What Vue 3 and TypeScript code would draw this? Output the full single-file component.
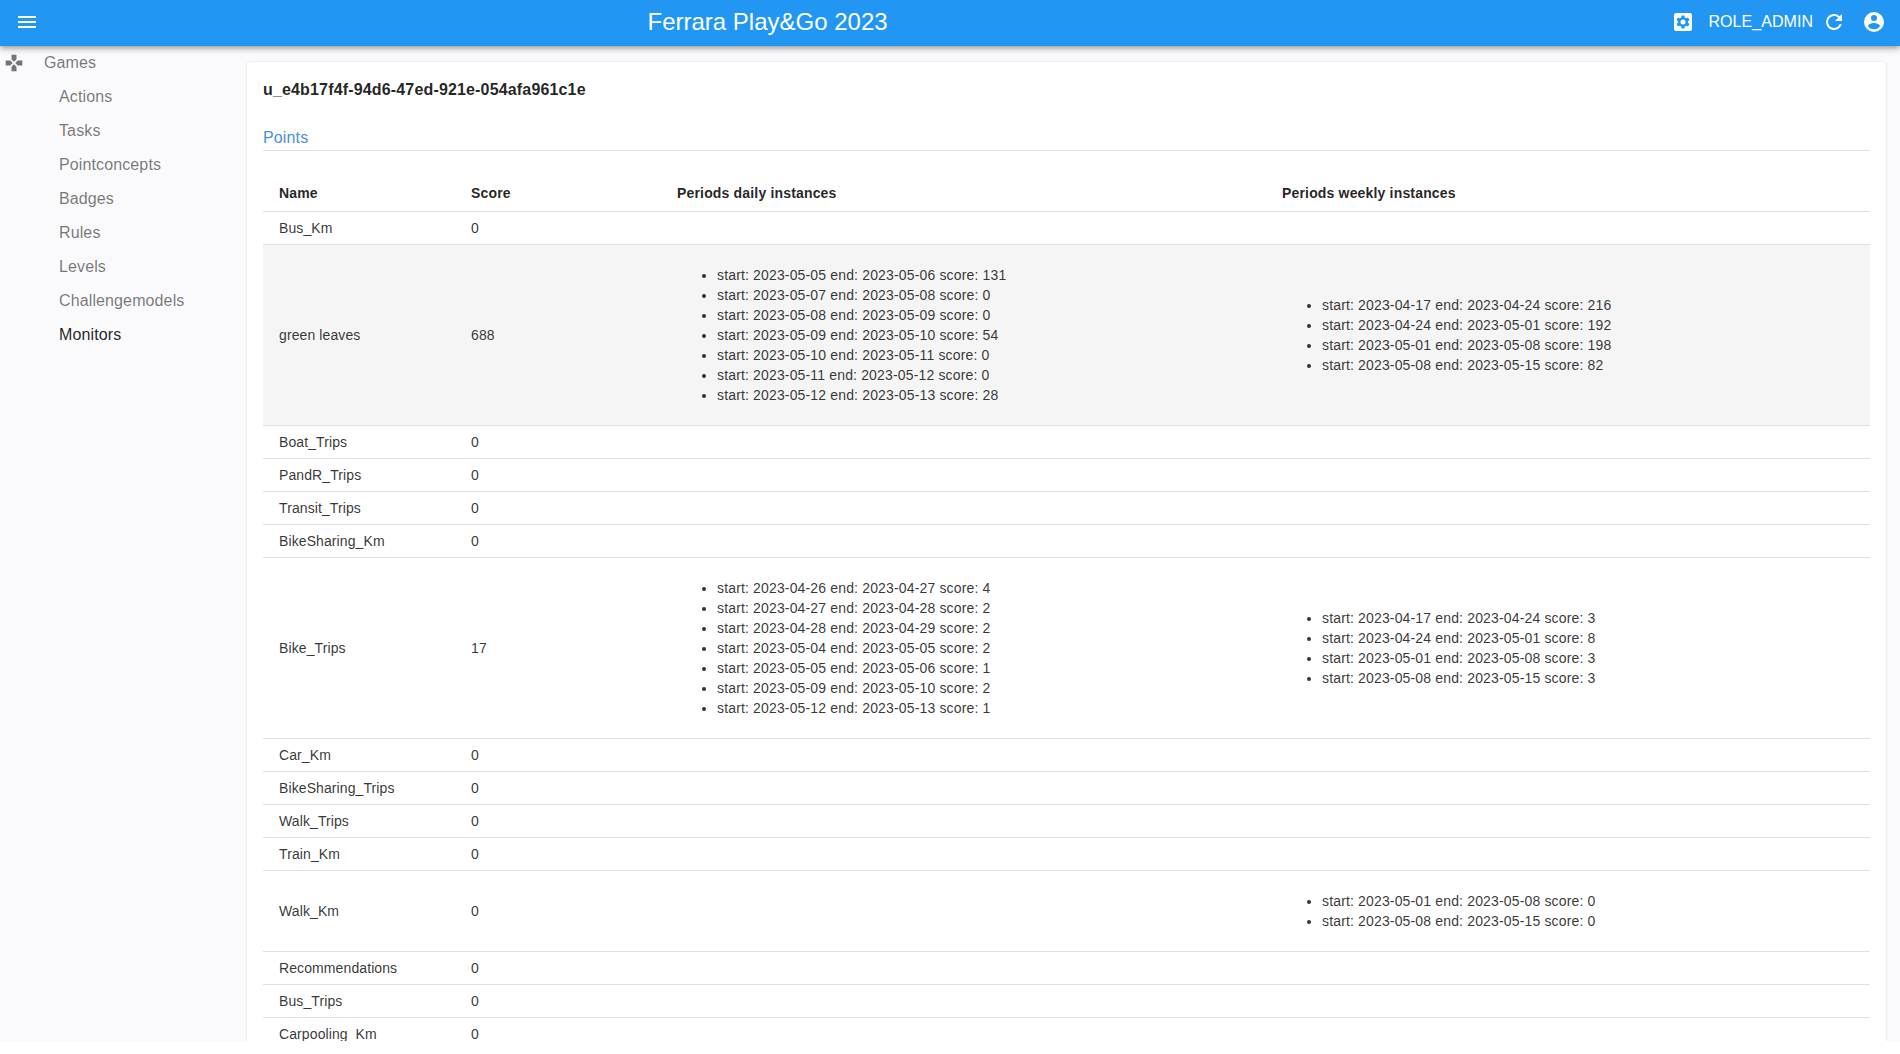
<script setup lang="ts">
interface Row {
  name: string
  score: number
  daily?: string[]
  weekly?: string[]
}

const item = (start: string, end: string, score: number) => `start: ${start} end: ${end} score: ${score}`

const menu = ['Actions', 'Tasks', 'Pointconcepts', 'Badges', 'Rules', 'Levels', 'Challengemodels', 'Monitors']

const rows: Row[] = [
  { name: 'Bus_Km', score: 0 },
  {
    name: 'green leaves',
    score: 688,
    daily: [
      item('2023-05-05', '2023-05-06', 131),
      item('2023-05-07', '2023-05-08', 0),
      item('2023-05-08', '2023-05-09', 0),
      item('2023-05-09', '2023-05-10', 54),
      item('2023-05-10', '2023-05-11', 0),
      item('2023-05-11', '2023-05-12', 0),
      item('2023-05-12', '2023-05-13', 28),
    ],
    weekly: [
      item('2023-04-17', '2023-04-24', 216),
      item('2023-04-24', '2023-05-01', 192),
      item('2023-05-01', '2023-05-08', 198),
      item('2023-05-08', '2023-05-15', 82),
    ],
  },
  { name: 'Boat_Trips', score: 0 },
  { name: 'PandR_Trips', score: 0 },
  { name: 'Transit_Trips', score: 0 },
  { name: 'BikeSharing_Km', score: 0 },
  {
    name: 'Bike_Trips',
    score: 17,
    daily: [
      item('2023-04-26', '2023-04-27', 4),
      item('2023-04-27', '2023-04-28', 2),
      item('2023-04-28', '2023-04-29', 2),
      item('2023-05-04', '2023-05-05', 2),
      item('2023-05-05', '2023-05-06', 1),
      item('2023-05-09', '2023-05-10', 2),
      item('2023-05-12', '2023-05-13', 1),
    ],
    weekly: [
      item('2023-04-17', '2023-04-24', 3),
      item('2023-04-24', '2023-05-01', 8),
      item('2023-05-01', '2023-05-08', 3),
      item('2023-05-08', '2023-05-15', 3),
    ],
  },
  { name: 'Car_Km', score: 0 },
  { name: 'BikeSharing_Trips', score: 0 },
  { name: 'Walk_Trips', score: 0 },
  { name: 'Train_Km', score: 0 },
  {
    name: 'Walk_Km',
    score: 0,
    weekly: [item('2023-05-01', '2023-05-08', 0), item('2023-05-08', '2023-05-15', 0)],
  },
  { name: 'Recommendations', score: 0 },
  { name: 'Bus_Trips', score: 0 },
  { name: 'Carpooling_Km', score: 0 },
]
</script>

<template>
  <div class="page">
    <header class="appbar">
      <button class="icon-btn burger" type="button">
        <svg viewBox="0 0 24 24" width="24" height="24"><path d="M3 6h18v2H3zm0 5h18v2H3zm0 5h18v2H3z" /></svg>
      </button>
      <div class="title">Ferrara Play&amp;Go 2023</div>
      <div class="actions">
        <svg class="cog" viewBox="0 0 24 24" width="24" height="24">
          <path fill-rule="evenodd" d="M5 3h14a2 2 0 0 1 2 2v14a2 2 0 0 1-2 2H5a2 2 0 0 1-2-2V5a2 2 0 0 1 2-2zm12 9.800v-1.600l1.500-1.200-1.500-2.500-1.800.7-1.400-.8L13.500 5.500h-3l-.3 1.900-1.400.8-1.800-.7-1.500 2.500 1.500 1.200v1.600L5.500 14l1.500 2.500 1.800-.7 1.400.8.3 1.900h3l.3-1.900 1.400-.8 1.800.7 1.500-2.500zM12 14.500a2.500 2.500 0 1 1 0-5 2.500 2.500 0 0 1 0 5z" />
        </svg>
        <span class="role">ROLE_ADMIN</span>
        <svg class="refresh" viewBox="0 0 24 24" width="24" height="24">
          <path d="M17.650 6.350A7.960 7.960 0 0 0 12 4a8 8 0 1 0 7.730 10h-2.080A6 6 0 1 1 12 6c1.660 0 3.140.69 4.220 1.780L13 11h7V4z" />
        </svg>
        <svg class="account" viewBox="0 0 24 24" width="24" height="24">
          <path d="M12 2a10 10 0 1 0 0 20 10 10 0 0 0 0-20zm0 3a3 3 0 1 1 0 6 3 3 0 0 1 0-6zm0 14.200a7.200 7.200 0 0 1-6-3.220c.03-1.990 4-3.080 6-3.080s5.970 1.090 6 3.080a7.200 7.200 0 0 1-6 3.220z" />
        </svg>
      </div>
    </header>

    <div class="body">
      <aside class="sidebar">
        <div class="group">
          <svg class="pad" viewBox="0 0 24 24" width="20" height="20">
            <path d="M15 7.500V2H9v5.500l3 3 3-3zM7.500 9H2v6h5.500l3-3-3-3zM9 16.500V22h6v-5.500l-3-3-3 3zM16.500 9l-3 3 3 3H22V9h-5.500z" />
          </svg>
          <span>Games</span>
        </div>
        <a v-for="m in menu" :key="m" class="link" :class="{ active: m === 'Monitors' }">{{ m }}</a>
      </aside>

      <main class="card">
        <h1 class="user">u_e4b17f4f-94d6-47ed-921e-054afa961c1e</h1>
        <div class="tab">Points</div>
        <table class="points">
          <thead>
            <tr>
              <th class="c-name">Name</th>
              <th class="c-score">Score</th>
              <th class="c-daily">Periods daily instances</th>
              <th>Periods weekly instances</th>
            </tr>
          </thead>
          <tbody>
            <tr v-for="(r, i) in rows" :key="i" :class="{ hover: r.name === 'green leaves' }">
              <td>{{ r.name }}</td>
              <td>{{ r.score }}</td>
              <td>
                <ul v-if="r.daily">
                  <li v-for="d in r.daily" :key="d">{{ d }}</li>
                </ul>
              </td>
              <td>
                <ul v-if="r.weekly">
                  <li v-for="w in r.weekly" :key="w">{{ w }}</li>
                </ul>
              </td>
            </tr>
          </tbody>
        </table>
      </main>
    </div>
  </div>
</template>

<style>
html,
body {
  margin: 0;
  background: #fff;
}
</style>

<style scoped>
.page {
  height: 1041px;
  overflow: hidden;
  background: #fafafc;
  font-family: "Liberation Sans", Arial, sans-serif;
  color: rgba(0, 0, 0, 0.87);
}

.appbar {
  position: relative;
  z-index: 2;
  height: 46px;
  display: flex;
  align-items: center;
  background: #2196f3;
  color: #fff;
  box-shadow: 0 2px 4px -1px rgba(0, 0, 0, 0.2), 0 4px 5px 0 rgba(0, 0, 0, 0.14), 0 1px 10px 0 rgba(0, 0, 0, 0.12);
}

.icon-btn {
  border: 0;
  padding: 0;
  background: none;
  display: flex;
}

.burger {
  margin: -2px 0 0 15px;
}

.burger svg {
  fill: #fff;
}

.title {
  position: absolute;
  left: 647.5px;
  top: 0;
  font-size: 24px;
  line-height: 44px;
}

.actions {
  margin: -2px 14px 0 auto;
  display: flex;
  align-items: center;
  fill: #fff;
}

.role {
  font-size: 16px;
  letter-spacing: 0.05px;
  margin: 0 9px 0 13px;
}

.refresh {
  margin-right: 16px;
}

.body {
  display: flex;
  align-items: flex-start;
}

.sidebar {
  width: 247px;
  flex: none;
  color: rgba(0, 0, 0, 0.54);
  font-size: 16px;
  letter-spacing: 0.12px;
}

.group {
  height: 34px;
  display: flex;
  align-items: center;
}

.pad {
  margin-left: 4px;
  margin-right: 20px;
  fill: #757575;
}

.link {
  display: block;
  height: 34px;
  line-height: 34px;
  padding-left: 59px;
}

.link.active {
  color: rgba(0, 0, 0, 0.87);
}

.card {
  flex: none;
  width: 1639px;
  height: 1000px;
  box-sizing: border-box;
  margin-top: 16px;
  padding: 16px;
  background: #fff;
  border-radius: 4px;
  box-shadow: 0 0 2px rgba(0, 0, 0, 0.15);
}

.user {
  margin: 0;
  font-size: 16px;
  line-height: 24px;
  font-weight: 700;
  letter-spacing: 0.16px;
}

.tab {
  margin-top: 24px;
  font-size: 16px;
  line-height: 24px;
  letter-spacing: 0.15px;
  color: #4a90d9;
  border-bottom: 1px solid #e0e0e0;
}

.points {
  width: 100%;
  margin-top: 24px;
  border-collapse: collapse;
  table-layout: fixed;
  font-size: 14px;
}

th {
  height: 36px;
  padding: 0 16px;
  text-align: left;
  font-size: 14px;
  font-weight: 700;
  letter-spacing: 0.17px;
  border-bottom: 1px solid #e0e0e0;
}

.c-name {
  width: 160px;
}

.c-score {
  width: 174px;
}

.c-daily {
  width: 573px;
}

td {
  height: 33px;
  padding: 4px 16px;
  box-sizing: border-box;
  color: rgba(0, 0, 0, 0.8);
  letter-spacing: 0.1px;
  border-bottom: 1px solid #e0e0e0;
}

tr.hover td {
  background: #f5f5f5;
}

ul {
  margin: 16px 0;
  padding-left: 40px;
  line-height: 20px;
  letter-spacing: 0.155px;
}
</style>
